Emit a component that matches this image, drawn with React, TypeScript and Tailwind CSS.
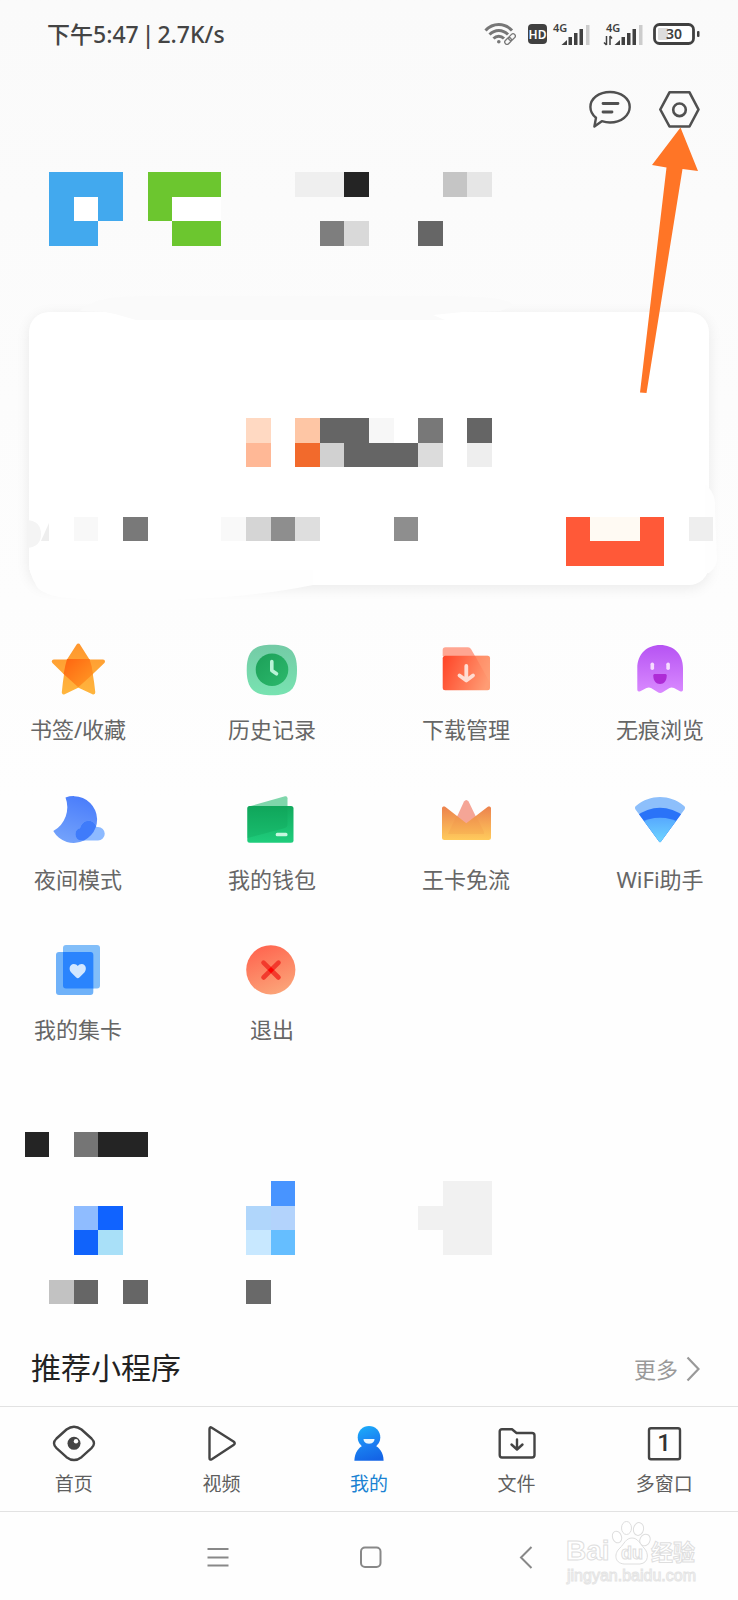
import type { ReactNode } from 'react';

// A run of equal cells: column, row, colour, width and height in cells
type Cell = [number, number, string, number?, number?];

const CELL = 24.6;

const profileCells: Cell[] = [
  [2, 0, '#42a9ee', 3, 1], [2, 1, '#42a9ee'], [3, 1, '#ffffff'], [4, 1, '#42a9ee'], [2, 2, '#42a9ee', 2, 1],
  [6, 0, '#6cc62f', 3, 1], [6, 1, '#6cc62f'], [7, 1, '#ffffff', 2, 1], [7, 2, '#6cc62f', 2, 1],
  [12, 0, '#efefef', 2, 1], [14, 0, '#242424'], [18, 0, '#c5c5c5'], [19, 0, '#e6e6e6'],
  [13, 2, '#7e7e7e'], [14, 2, '#d9d9d9'], [17, 2, '#666666'],
];

const cardCells: Cell[] = [
  [10, 17, '#ffd9c2'], [12, 17, '#fec6a5'], [13, 17, '#656565', 2, 1], [15, 17, '#f7f7f7'], [17, 17, '#787878'], [19, 17, '#656565'],
  [10, 18, '#ffb896'], [12, 18, '#f26a2c'], [13, 18, '#d1d1d1'], [14, 18, '#656565', 3, 1], [17, 18, '#dcdcdc'], [19, 18, '#eeeeee'],
  [3, 21, '#f8f8f8'], [5, 21, '#797979'], [9, 21, '#f9f9f9'], [10, 21, '#d5d5d5'], [11, 21, '#8e8e8e'], [12, 21, '#dedede'], [16, 21, '#8e8e8e'],
  [23, 21, '#ff5938', 4, 2], [24, 21, '#fffaf3', 2, 1], [28, 21, '#eeeeee'],
];

const recentCells: Cell[] = [
  [1, 0, '#242424'], [3, 0, '#757575'], [4, 0, '#242424', 2, 1],
  [3, 3, '#8fbcff'], [4, 3, '#1063ff'], [3, 4, '#1063fb'], [4, 4, '#a9e0f8'],
  [11, 2, '#4894ff'], [10, 3, '#b0d6fb'], [11, 3, '#b3d3fc'], [10, 4, '#c8e8ff'], [11, 4, '#65beff'],
  [18, 2, '#f1f1f1', 2, 3], [17, 3, '#f1f1f1'],
  [2, 6, '#c2c2c2'], [3, 6, '#666666'], [5, 6, '#666666'], [10, 6, '#696969'],
];

function Cells({ cells }: { cells: Cell[] }) {
  return (
    <g shapeRendering="crispEdges">
      {cells.map(([col, row, color, w = 1, h = 1]) => (
        <rect key={`${col}-${row}`} x={col * CELL} y={row * CELL} width={w * CELL} height={h * CELL} fill={color} />
      ))}
    </g>
  );
}

function Signal({ data }: { data?: boolean }) {
  return (
    <svg className="overflow-visible" width="40" height="24" viewBox="0 0 40 24" fill="#404040">
      <text x={data ? 3 : 0} y="10" fontSize="11" fontWeight="600" fontFamily="'Noto Sans', sans-serif">4G</text>
      {data && <path d="M3.500 23v-9M3.500 23l-2.500-2.500M7 14v9M7 14l2 2.500" stroke="#404040" strokeWidth="1.500" fill="none" />}
      <g transform={data ? 'translate(3 0)' : undefined}>
        <path d="M8.500 23l5.500-5v5z" />
        <rect x="15.500" y="15" width="3.500" height="8" />
        <rect x="21" y="11" width="3.500" height="12" />
        <rect x="26.500" y="7" width="3.500" height="16" />
        <rect x="33" y="3" width="3.500" height="20" fill="#cccccc" />
      </g>
    </svg>
  );
}

function StatusBar() {
  return (
    <div className="flex h-[68px] items-center justify-between pl-[47px] pr-[38px]">
      <div className="flex gap-[3px] text-[23px] font-medium text-[#444444]">
        <span>下午5:47</span>
        <span>|</span>
        <span>2.7K/s</span>
      </div>
      <div className="flex items-center">
        <svg width="32" height="22" viewBox="0 0 32 22" fill="none" stroke="#777777" strokeWidth="3">
          <path d="M1.500 7.500C9-.5 20.500-.5 28 7.500" />
          <path d="M5.500 11.500c5.500-5.500 13-5.500 18.500 0" />
          <path d="M9.500 15.500c3-3 7.500-3 10.500 0" />
          <circle cx="14.800" cy="18.800" r="1.800" fill="#777777" stroke="none" />
          <g strokeWidth="1.300" transform="rotate(-45 26 16)">
            <rect x="19.500" y="13.800" width="7.500" height="4.500" rx="2.200" />
            <rect x="25" y="13.800" width="7.500" height="4.500" rx="2.200" />
          </g>
        </svg>
        <svg className="ml-3 overflow-visible" width="19" height="20" viewBox="0 0 19 20">
          <rect y="0" width="19" height="20" rx="4" fill="#404040" />
          <text x="9.500" y="14.500" textAnchor="middle" fontSize="12" fontWeight="600" fill="#fff" fontFamily="'Noto Sans', sans-serif">HD</text>
        </svg>
        <span className="ml-1.5"><Signal /></span>
        <span className="ml-2.5"><Signal data /></span>
        <svg className="ml-2.5 overflow-visible" width="47" height="22" viewBox="0 0 47 22">
          <rect x="1.500" y="1.500" width="39" height="19" rx="5" fill="#fff" stroke="#404040" strokeWidth="2.800" />
          <rect x="5" y="5" width="10" height="12" rx="1" fill="#dddddd" />
          <rect x="44" y="8" width="2.500" height="6" rx="1" fill="#404040" />
          <text x="21" y="16" textAnchor="middle" fontSize="14" fontWeight="600" fill="#404040" fontFamily="'Noto Sans', sans-serif">30</text>
        </svg>
      </div>
    </div>
  );
}

function Header() {
  return (
    <header className="flex justify-end gap-[27px] pr-[38px] pt-[22px]">
      <button type="button" aria-label="消息">
        <svg width="42" height="38" viewBox="0 0 42 38" fill="none" stroke="#505050" strokeWidth="2.400" strokeLinejoin="round" strokeLinecap="round">
          <path d="M7 27.800C3.500 25 1.400 21.300 1.400 17 1.400 8.500 10 2 21 2s19.700 6.500 19.700 15S32 32.500 21 32.500c-3 0-5.500-.5-8.200-1.300L5.400 36.500z" />
          <path d="M14 13.500h15M14 22h9" strokeWidth="2.800" />
        </svg>
      </button>
      <button type="button" aria-label="设置">
        <svg width="42" height="38" viewBox="0 0 42 38" fill="none" stroke="#505050" strokeWidth="2.600" strokeLinejoin="round">
          <path d="M11.500 2.300h20L40.500 19.500l-9 17h-20L2.300 19.500z" />
          <circle cx="21.500" cy="19.800" r="6.300" />
        </svg>
      </button>
    </header>
  );
}

// Pointer from the card up to the settings button
function Pointer() {
  return (
    <svg className="pointer-events-none absolute right-[38px] top-[127px]" width="62" height="267" viewBox="0 0 62 267" aria-hidden="true">
      <path d="M42.500 0.500L60 44l-15.500-2L8.500 266 2 265.500 28.500 40.500 14 38z" fill="#ff7526" />
    </svg>
  );
}

function Card() {
  return (
    <section className="relative mt-[66px] px-[29px]">
      <div className="h-[273px] rounded-[20px] bg-white shadow-[0_3px_14px_rgba(0,0,0,0.08)]" />
      <svg className="absolute -top-6 left-0 w-full" viewBox="0 288 738 324" aria-hidden="true">
        <path d="M80 311C90 300 110 296 150 296H440C500 296 530 302 500 311L463 312 433 315 445 320H136L115 314 105 312z" fill="#fafafa" />
        <path d="M29 564Q30 575 35 583Q37 590 46 593 60 602 170 600 250 598 313 585V570H29z" fill="#fefefe" />
        <path d="M705 485L709 488Q716 495 715 510L717 560Q716 568 709 573H705z" fill="#fefefe" />
        <path d="M27 520Q41 521 41 534T27 548z" fill="#f4f4f4" />
        <path d="M49 523V541H41z" fill="#eeeeee" />
        <Cells cells={cardCells} />
      </svg>
    </section>
  );
}

function StarIcon() {
  return (
    <>
      <defs>
        <linearGradient id="star" gradientUnits="userSpaceOnUse" x1="28" y1="2" x2="28" y2="53">
          <stop offset="0" stopColor="#ff962e" />
          <stop offset="1" stopColor="#ffb63e" />
        </linearGradient>
        <linearGradient id="starCore" x1="0" y1="0" x2="1" y2="1">
          <stop offset="0" stopColor="#ff6410" />
          <stop offset="1" stopColor="#ff9c26" />
        </linearGradient>
      </defs>
      <g fill="url(#star)" stroke="url(#star)" strokeWidth="4" strokeLinejoin="round">
        <path d="M28.300 3.500L37.500 18Q41.500 32 43.300 50.500L28.300 43.500 13.800 50.500Q15.500 32 19 18z" />
        <path d="M3.800 19.500H53L41 31 28.300 42.500 15.500 31z" />
      </g>
      <path d="M17 17H39.500Q42 24 43 32L28.300 45.300 13.600 32Q15 24 17 17z" fill="url(#starCore)" />
    </>
  );
}

function ClockIcon() {
  return (
    <>
      <defs>
        <linearGradient id="clock" x1="0" y1="0" x2="0" y2="1">
          <stop offset="0" stopColor="#74cba6" />
          <stop offset="1" stopColor="#78e3b1" />
        </linearGradient>
        <linearGradient id="clockFace" x1="0" y1="0" x2="1" y2="1">
          <stop offset="0" stopColor="#1c9f58" />
          <stop offset="1" stopColor="#2cb96c" />
        </linearGradient>
      </defs>
      <path d="M28 2.700C46 2.700 53 9 53 28S46 53.300 28 53.300 2.700 47 2.700 28 10 2.700 28 2.700z" fill="url(#clock)" />
      <circle cx="28" cy="27.800" r="16.300" fill="url(#clockFace)" />
      <path d="M27.800 19.500V28.500L32.500 31.800" fill="none" stroke="#b9f3d6" strokeWidth="3.600" strokeLinecap="round" strokeLinejoin="round" />
    </>
  );
}

function DownloadIcon() {
  return (
    <>
      <defs>
        <linearGradient id="folder" x1="0" y1="0.300" x2="1" y2="0.600">
          <stop offset="0" stopColor="#ff4a2c" />
          <stop offset="1" stopColor="#ff9c74" />
        </linearGradient>
      </defs>
      <path d="M7.500 5.300H30Q32 5.300 33 7L37 14H4.700V8Q4.700 5.300 7.500 5.300z" fill="#ffa692" />
      <rect x="4.700" y="13.700" width="47.300" height="34.500" rx="2.500" fill="url(#folder)" />
      <path d="M37 13.700H49.500Q52 13.700 52 16.200V41z" fill="#ffa47e" opacity="0.400" />
      <path d="M28.300 24V38M21.500 33.500L28.300 38.500 35 33.500" fill="none" stroke="#ffdcd2" strokeWidth="3.800" strokeLinecap="round" strokeLinejoin="round" />
    </>
  );
}

function GhostIcon() {
  return (
    <>
      <defs>
        <linearGradient id="ghost" x1="0" y1="0" x2="0" y2="1">
          <stop offset="0" stopColor="#b653f3" />
          <stop offset="1" stopColor="#d98aff" />
        </linearGradient>
      </defs>
      <path d="M5.300 26C5.300 12 15 3 28.200 3S51 12 51 26V47.500Q51 50.500 48 49.200L42 46Q39.500 44.800 37.500 46L31 50Q28.200 51.800 25.500 50L19 46Q17 44.800 14.500 46L8.300 49.200Q5.300 50.500 5.300 47.500z" fill="url(#ghost)" />
      <rect x="18.500" y="20.500" width="3.600" height="7.500" rx="1.800" fill="#f6dcff" />
      <rect x="34.300" y="20.500" width="3.600" height="7.500" rx="1.800" fill="#f6dcff" />
      <path d="M22.500 32H33.500Q34.700 32 34.700 33.500C34.700 39 32 42 28 42S21.300 39 21.300 33.500Q21.300 32 22.500 32z" fill="#ae2bd6" />
    </>
  );
}

function MoonIcon() {
  const cloud = 'M31 48.500A6.300 6.300 0 0 1 30 36.200C31.500 31.500 34.500 28.800 38.500 28.800S45.500 31.500 46.500 35H48A6.700 6.700 0 0 1 48 48.500z';
  return (
    <>
      <defs>
        <linearGradient id="moon" x1="0.600" y1="0" x2="0.300" y2="1">
          <stop offset="0" stopColor="#4a7dfb" />
          <stop offset="1" stopColor="#74a3fb" />
        </linearGradient>
        <clipPath id="moonClip">
          <path d="M15.500 5.600A23.400 23.400 0 1 1 3.300 39A27 27 0 0 0 15.500 5.600z" />
        </clipPath>
      </defs>
      <path d="M15.500 5.600A23.400 23.400 0 1 1 3.300 39A27 27 0 0 0 15.500 5.600z" fill="url(#moon)" />
      <path d={cloud} fill="#8dbaff" />
      <path d={cloud} fill="#3f7bfa" clipPath="url(#moonClip)" />
    </>
  );
}

function WalletIcon() {
  return (
    <>
      <defs>
        <linearGradient id="wallet" x1="0" y1="0" x2="0" y2="1">
          <stop offset="0" stopColor="#12a95d" />
          <stop offset="1" stopColor="#1fcd7c" />
        </linearGradient>
      </defs>
      <path d="M5 14.500L41 4.300Q43.500 3.800 43.500 6.300V16H5z" fill="#7fd6ab" />
      <rect x="3.300" y="14" width="46.200" height="36.700" rx="2.500" fill="url(#wallet)" />
      <path d="M3.300 16.500Q3.300 14 5.800 14H43.500V33Q43.500 35 41 36L3.300 46z" fill="#0c9f56" opacity="0.300" />
      <rect x="31.700" y="40.700" width="11.800" height="3.600" rx="1.500" fill="#c6f7df" />
    </>
  );
}

function CrownIcon() {
  return (
    <>
      <defs>
        <linearGradient id="crown" x1="0" y1="0" x2="0" y2="1">
          <stop offset="0" stopColor="#ec824d" />
          <stop offset="1" stopColor="#ffcb5c" />
        </linearGradient>
      </defs>
      <path d="M26 9.500Q28.300 6.500 30.600 9.500L40 29 28.300 34 17 29z" fill="#f5a596" />
      <path d="M4 16.500C4 14.500 6 14 7.500 15L28.300 31.300 49.500 15C51 14 53 14.500 53 16.500V45.500Q53 48 50.500 48H6.500Q4 48 4 45.500z" fill="url(#crown)" />
      <path d="M18.500 24L28.300 31.300 38 24 46 40 46 42H10z" fill="#ee8340" opacity="0.160" />
    </>
  );
}

function WifiIcon() {
  return (
    <>
      <defs>
        <linearGradient id="fan" x1="0" y1="0" x2="0" y2="1">
          <stop offset="0" stopColor="#57a9ff" />
          <stop offset="1" stopColor="#74e0ff" />
        </linearGradient>
        <clipPath id="fanClip">
          <path d="M3.500 17.500Q2 15 4.500 13.500C18 2 38 2 51.500 13.500Q54 15 52.500 17.500L29 49.500Q28 51 27 49.500z" />
        </clipPath>
      </defs>
      <g clipPath="url(#fanClip)">
        <rect width="56" height="56" fill="#8dbffb" />
        <path d="M0 27Q28 4.500 56 27V56H0z" fill="#2a73f8" />
        <path d="M6 31.500Q28 20 50 31.500V56H6z" fill="url(#fan)" />
      </g>
    </>
  );
}

function CardsIcon() {
  return (
    <>
      <rect x="13" y="3" width="37" height="43.500" rx="3" fill="#82bef9" />
      <rect x="6" y="10" width="37.300" height="43" rx="3" fill="#70b2f9" />
      <path d="M13 10H40.300Q43.300 10 43.300 13V46.500H16Q13 46.500 13 43.500z" fill="#2a84fd" />
      <path d="M27.800 36.300Q27 36.300 26 35.300L21 30.200C18.500 27.500 19.500 22 23.800 22 25.500 22 27 22.800 27.800 24 28.600 22.800 30 22 31.800 22 36 22 37 27.500 34.600 30.200L29.600 35.300Q28.600 36.300 27.800 36.300z" fill="#d2e7ff" />
    </>
  );
}

function ExitIcon() {
  return (
    <>
      <defs>
        <linearGradient id="exit" x1="0.300" y1="0" x2="0.700" y2="1">
          <stop offset="0" stopColor="#ff654f" />
          <stop offset="1" stopColor="#fba67a" />
        </linearGradient>
      </defs>
      <circle cx="26.800" cy="27.800" r="24.600" fill="url(#exit)" />
      <g stroke="#f23a2c" strokeWidth="4.600" strokeLinecap="round">
        <path d="M19.500 20.700L34.500 35.500M34.500 20.700L19.500 35.500" />
      </g>
      <path d="M27 24.900l3.200 3.200-3.200 3.200-3.200-3.200z" fill="#ff0000" />
    </>
  );
}

const shortcuts: { label: string; icon: ReactNode }[] = [
  { label: '书签/收藏', icon: <StarIcon /> },
  { label: '历史记录', icon: <ClockIcon /> },
  { label: '下载管理', icon: <DownloadIcon /> },
  { label: '无痕浏览', icon: <GhostIcon /> },
  { label: '夜间模式', icon: <MoonIcon /> },
  { label: '我的钱包', icon: <WalletIcon /> },
  { label: '王卡免流', icon: <CrownIcon /> },
  { label: 'WiFi助手', icon: <WifiIcon /> },
  { label: '我的集卡', icon: <CardsIcon /> },
  { label: '退出', icon: <ExitIcon /> },
];

function Shortcuts() {
  return (
    <section className="mt-[57px] grid grid-cols-[repeat(4,104px)] justify-between gap-y-[47px] px-[26px]">
      {shortcuts.map((item) => (
        <button key={item.label} type="button" className="flex flex-col items-center gap-[15px]">
          <svg width="56" height="56" viewBox="0 0 56 56" aria-hidden="true">{item.icon}</svg>
          <span className="whitespace-nowrap text-[22px] leading-8 text-[#666666]">{item.label}</span>
        </button>
      ))}
    </section>
  );
}

const tabs: { label: string; active?: boolean; icon: ReactNode }[] = [
  {
    label: '首页',
    icon: (
      <>
        <path d="M14.500 8.500Q22 2.800 29.500 8.500L39.500 17.500Q44.500 22.300 39.500 27.200L29.500 36.200Q22 41.800 14.500 36.200L4.500 27.200Q-.5 22.300 4.500 17.500z" />
        <circle cx="22" cy="22.300" r="6.500" fill="#444444" stroke="none" />
        <circle cx="24" cy="20.300" r="2.200" fill="#fff" stroke="none" />
      </>
    ),
  },
  {
    label: '视频',
    icon: <path d="M10.500 8Q10.500 5.500 12.800 6.700L34.500 20.500Q37 22.300 34.500 24L12.800 38.200Q10.500 39.500 10.500 37z" />,
  },
  {
    label: '我的',
    active: true,
    icon: (
      <g stroke="none">
        <defs>
          <linearGradient id="me" x1="0" y1="0" x2="0.400" y2="1">
            <stop offset="0" stopColor="#1cb0fa" />
            <stop offset="1" stopColor="#1a78f0" />
          </linearGradient>
          <linearGradient id="meBody" x1="0" y1="0" x2="0.600" y2="1">
            <stop offset="0" stopColor="#1a86f2" />
            <stop offset="1" stopColor="#1464e6" />
          </linearGradient>
        </defs>
        <path d="M7.400 39.800C7.400 31 12.500 26 16 24.500H28C31.500 26 36.600 31 36.600 39.800z" fill="url(#meBody)" />
        <ellipse cx="22" cy="16.200" rx="11.300" ry="11.300" fill="url(#me)" />
        <path d="M16.500 18H27.500C27.500 21 25 22.700 22 22.700S16.500 21 16.500 18z" fill="#e8f6ff" />
      </g>
    ),
  },
  {
    label: '文件',
    icon: (
      <>
        <path d="M4.700 10.500Q4.700 8.300 7 8.300H17L21.500 12H37Q39.500 12 39.500 14.500V34Q39.500 36.500 37 36.500H7Q4.700 36.500 4.700 34z" />
        <path d="M22 18.500V28.300M16.500 23.500L22 28.500 27.500 23.500" />
      </>
    ),
  },
  {
    label: '多窗口',
    icon: (
      <>
        <rect x="7" y="7.300" width="31" height="31" rx="2" />
        <text x="22" y="30" textAnchor="middle" fontSize="24" fontWeight="500" fill="#333333" stroke="none" fontFamily="Roboto, sans-serif">1</text>
      </>
    ),
  },
];

function TabBar() {
  return (
    <nav className="flex h-[105px] border-t border-[#e2e2e2] pt-[14px]">
      {tabs.map((tab) => (
        <button key={tab.label} type="button" className="flex flex-1 flex-col items-center gap-[5px]">
          <svg width="44" height="44" viewBox="0 0 44 44" fill="none" stroke="#444444" strokeWidth="2.400" strokeLinejoin="round" strokeLinecap="round" aria-hidden="true">
            {tab.icon}
          </svg>
          <span className={`text-[19px] leading-7 ${tab.active ? 'text-[#1a82d2]' : 'text-[#5f5f5f]'}`}>{tab.label}</span>
        </button>
      ))}
    </nav>
  );
}

function Watermark() {
  return (
    <svg
      className="absolute right-[37px] top-[7px]"
      width="136"
      height="68"
      viewBox="0 0 136 68"
      fill="#ffffff"
      stroke="#dedede"
      strokeWidth="1"
      fontWeight="700"
      fontFamily="'Liberation Sans', 'Noto Sans CJK SC', sans-serif"
    >
      <text x="1" y="41" fontSize="28">Bai</text>
      <ellipse cx="52" cy="18" rx="4.500" ry="6" transform="rotate(-20 52 18)" />
      <ellipse cx="61.500" cy="9" rx="5" ry="6.500" />
      <ellipse cx="73.500" cy="10" rx="5" ry="6.500" transform="rotate(12 73.500 10)" />
      <ellipse cx="80" cy="21" rx="5" ry="6" transform="rotate(30 80 21)" />
      <path d="M67 19C73 19 75 25 79 29 84 34 84 44 75 45H59C49 44 49 34 55 29 59 25 61 19 67 19z" />
      <text x="67" y="40" textAnchor="middle" fontSize="18">du</text>
      <text x="86" y="41" fontSize="22">经验</text>
      <text x="2" y="62" fontSize="16" fontWeight="400" stroke="#e4e4e4">jingyan.baidu.com</text>
    </svg>
  );
}

function SystemNav() {
  return (
    <div className="relative flex h-[88px] items-center justify-center gap-[122px] border-t border-[#e2e2e2] pl-1.5 pt-0.5">
      <button type="button" aria-label="菜单">
        <svg width="32" height="32" viewBox="0 0 32 32" stroke="#888888" strokeWidth="2"><path d="M5.500 8H26.500M5.500 16.500H26.500M5.500 24.500H26.500" /></svg>
      </button>
      <button type="button" aria-label="主屏幕">
        <svg width="32" height="32" viewBox="0 0 32 32" fill="none" stroke="#888888" strokeWidth="2"><rect x="5" y="6.500" width="19.500" height="19.500" rx="4" /></svg>
      </button>
      <button type="button" aria-label="返回">
        <svg width="32" height="32" viewBox="0 0 32 32" fill="none" stroke="#888888" strokeWidth="2"><path d="M21.500 6L11 16.500 21.500 27" /></svg>
      </button>
      <Watermark />
    </div>
  );
}

export default function App() {
  return (
    <div className="relative min-h-screen overflow-hidden bg-linear-to-b from-[#fafafa] to-[#fefefe] to-50% font-['Noto_Sans','Noto_Sans_CJK_SC',sans-serif]">
      <StatusBar />
      <Header />
      <svg className="mt-11 block w-full" viewBox="0 0 738 74" aria-hidden="true">
        <Cells cells={profileCells} />
      </svg>
      <Card />
      <Shortcuts />
      <svg className="mt-[87px] block w-full" viewBox="0 0 738 172" aria-hidden="true">
        <Cells cells={recentCells} />
      </svg>
      <section className="mt-7 flex h-[74px] items-center justify-between pl-[31px] pr-[38px]">
        <h2 className="pb-1 text-[30px] text-[#222222]">推荐小程序</h2>
        <a href="#more" className="flex items-center gap-2 text-[22px] text-[#999999]">
          更多
          <svg width="14" height="26" viewBox="0 0 14 26" fill="none" stroke="#999999" strokeWidth="2.200"><path d="M1.500 1.500L12.500 13 1.500 24.500" /></svg>
        </a>
      </section>
      <TabBar />
      <SystemNav />
      <Pointer />
    </div>
  );
}
